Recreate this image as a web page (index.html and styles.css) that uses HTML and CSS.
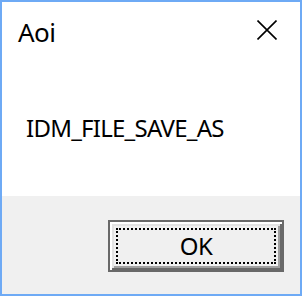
FILE: index.html
```html
<!DOCTYPE html>
<html>
<head>
<meta charset="utf-8">
<link rel="stylesheet" href="styles.css">
</head>
<body>
<div class="window">
  <div class="content">
    <div class="titlebar">
      <span class="title">Aoi</span>
      <svg class="close" width="20" height="20" viewBox="0 0 20 20"><path d="M0.5 0.5 L19.5 19.5 M19.5 0.5 L0.5 19.5" stroke="#000" stroke-width="1.6" fill="none"/></svg>
    </div>
    <div class="message">IDM_FILE_SAVE_AS</div>
  </div>
  <div class="footer">
    <button class="btn"><span class="focus">OK</span></button>
  </div>
</div>
</body>
</html>
```
FILE: styles.css
```css
html, body {
  margin: 0;
  padding: 0;
  background: #fff;
}
.window {
  width: 302px;
  height: 296px;
  box-sizing: border-box;
  border: 2px solid #6eaaf5;
  display: flex;
  flex-direction: column;
  font-family: "Noto Sans", "Open Sans", sans-serif;
  color: #000;
}
.content {
  height: 194px;
  background: #fff;
}
.titlebar {
  height: 60px;
  box-sizing: border-box;
  padding: 14px 23px 0 16px;
  display: flex;
  justify-content: space-between;
  align-items: flex-start;
}
.title {
  font-size: 26px;
  line-height: 32px;
  letter-spacing: -0.6px;
}
.close {
  margin-top: 4px;
  display: block;
}
.message {
  margin-top: 50px;
  padding-left: 24px;
  font-size: 24px;
  line-height: 32px;
  letter-spacing: -0.75px;
}
.footer {
  flex: 1;
  background: #f0f0f0;
  display: flex;
  justify-content: flex-end;
  align-items: flex-start;
  padding: 24px 16px 0 0;
}
.btn {
  width: 176px;
  height: 52px;
  box-sizing: border-box;
  border: 2px solid #696969;
  background: #f0f0f0;
  padding: 6px;
  margin: 0;
  display: flex;
  font-family: inherit;
  box-shadow: inset 2px 2px 0 #fff, inset -2px -2px 0 #696969, inset 4px 4px 0 #e3e3e3, inset -4px -4px 0 #a0a0a0;
}
.focus {
  flex: 1;
  border: 2px dotted #000;
  display: flex;
  align-items: center;
  justify-content: center;
  font-size: 24px;
  line-height: 32px;
  letter-spacing: -0.5px;
  color: #000;
}
```
